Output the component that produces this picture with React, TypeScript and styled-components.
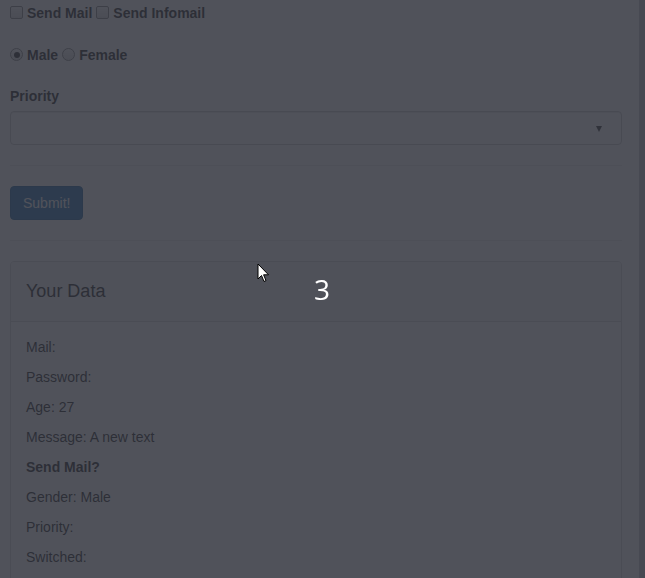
import React from 'react';
import styled, { createGlobalStyle } from 'styled-components';

const GlobalStyle = createGlobalStyle`
  html, body {
    margin: 0;
    padding: 0;
    overflow: hidden;
    background: #fff;
  }
  body {
    font-family: "Liberation Sans", Arial, Helvetica, sans-serif;
    font-size: 14px;
    line-height: 20px;
    color: #333;
  }
  * { box-sizing: border-box; }
`;

const Page = styled.div`
  display: flex;
  min-height: 578px;
`;

const Main = styled.main`
  flex: 1;
  padding: 3px 17px 0 10px;
`;

const ScrollStrip = styled.div`
  width: 6px;
  background: #cacad0;
`;

const InlineRow = styled.div<{ gap?: number }>`
  display: flex;
  align-items: center;
  height: 20px;
  margin-bottom: ${({ gap }) => gap ?? 0}px;
`;

const CheckLabel = styled.label`
  display: inline-flex;
  align-items: center;
  font-weight: 700;
  margin-right: 4px;
`;

const Box = styled.input`
  appearance: none;
  position: relative;
  width: 13px;
  height: 13px;
  margin: -1px 4px 0 0;
  border: 1px solid #8f8f8f;
  border-radius: ${({ type }) => (type === 'radio' ? '50%' : '2px')};
  background: linear-gradient(#fafafa, #dcdcdc);

  &:checked::after {
    content: '';
    position: absolute;
    left: 2.5px;
    top: 2.5px;
    width: 6px;
    height: 6px;
    border-radius: 50%;
    background: #3a3a3a;
  }
`;

const FormGroup = styled.div`
  margin-bottom: 20px;
`;

const Label = styled.label`
  display: block;
  font-weight: 700;
  margin-bottom: 5px;
`;

const SelectWrap = styled.div`
  position: relative;

  &::after {
    content: '';
    position: absolute;
    right: 20px;
    top: 15px;
    border-left: 3px solid transparent;
    border-right: 3px solid transparent;
    border-top: 6px solid #444;
  }
`;

const Select = styled.select`
  appearance: none;
  display: block;
  width: 100%;
  height: 34px;
  padding: 6px 12px;
  font: inherit;
  color: #555;
  background: #fff;
  border: 1px solid #ccc;
  border-radius: 4px;
  box-shadow: inset 0 1px 1px rgba(0, 0, 0, 0.075);
`;

const Rule = styled.hr`
  margin: 0;
  border: 0;
  border-top: 1px solid #eee;
`;

const ButtonRow = styled.div`
  padding: 20px 0;
`;

const Button = styled.button`
  display: inline-block;
  height: 34px;
  padding: 6px 12px;
  font: inherit;
  color: #fff;
  background: #337ab7;
  border: 1px solid #2e6da4;
  border-radius: 4px;
`;

const Panel = styled.section`
  margin-top: 20px;
  border: 1px solid #ddd;
  border-radius: 4px;
  background: #fff;
`;

const PanelHeading = styled.div`
  padding: 19px 15px 20px;
  background: #f5f5f5;
  border-bottom: 1px solid #ddd;
  border-radius: 3px 3px 0 0;
`;

const PanelTitle = styled.h3`
  margin: 0;
  font-size: 18px;
  font-weight: 400;
  line-height: 20px;
  color: #333;
`;

const PanelBody = styled.div`
  padding: 15px;
`;

const Line = styled.p<{ strong?: boolean }>`
  margin: 0 0 10px;
  font-weight: ${({ strong }) => (strong ? 700 : 400)};
`;

const Backdrop = styled.div`
  position: fixed;
  inset: 0;
  background: rgba(44, 47, 57, 0.83);
`;

const Counter = styled.div`
  position: fixed;
  left: 314px;
  top: 270px;
  font-family: "Open Sans", "Noto Sans", sans-serif;
  font-size: 28px;
  line-height: 38px;
  color: #fff;
`;

const Cursor = styled.svg`
  position: fixed;
  left: 257px;
  top: 263px;
`;

const data: { text: string; strong?: boolean }[] = [
  { text: 'Mail:' },
  { text: 'Password:' },
  { text: 'Age: 27' },
  { text: 'Message: A new text' },
  { text: 'Send Mail?', strong: true },
  { text: 'Gender: Male' },
  { text: 'Priority:' },
  { text: 'Switched:' },
];

export default function App() {
  return (
    <>
      <GlobalStyle />
      <Page>
        <Main>
          <InlineRow gap={22}>
            <CheckLabel>
              <Box type="checkbox" />
              Send Mail
            </CheckLabel>
            <CheckLabel>
              <Box type="checkbox" />
              Send Infomail
            </CheckLabel>
          </InlineRow>
          <InlineRow gap={21}>
            <CheckLabel>
              <Box type="radio" name="gender" defaultChecked />
              Male
            </CheckLabel>
            <CheckLabel>
              <Box type="radio" name="gender" />
              Female
            </CheckLabel>
          </InlineRow>
          <FormGroup>
            <Label>Priority</Label>
            <SelectWrap>
              <Select defaultValue="">
                <option value="" />
              </Select>
            </SelectWrap>
          </FormGroup>
          <Rule />
          <ButtonRow>
            <Button type="button">Submit!</Button>
          </ButtonRow>
          <Rule />
          <Panel>
            <PanelHeading>
              <PanelTitle>Your Data</PanelTitle>
            </PanelHeading>
            <PanelBody>
              {data.map((d) => (
                <Line key={d.text} strong={d.strong}>
                  {d.text}
                </Line>
              ))}
            </PanelBody>
          </Panel>
        </Main>
        <ScrollStrip />
      </Page>
      <Backdrop />
      <Counter>3</Counter>
      <Cursor width="13" height="21" viewBox="0 0 13 21">
        <path
          d="M1 1 L1 16 L4.5 12.5 L7 18.5 L9 17.6 L6.6 11.8 L11.5 11.8 Z"
          fill="#fff"
          stroke="#000"
          strokeWidth="1"
          strokeLinejoin="miter"
        />
      </Cursor>
    </>
  );
}
